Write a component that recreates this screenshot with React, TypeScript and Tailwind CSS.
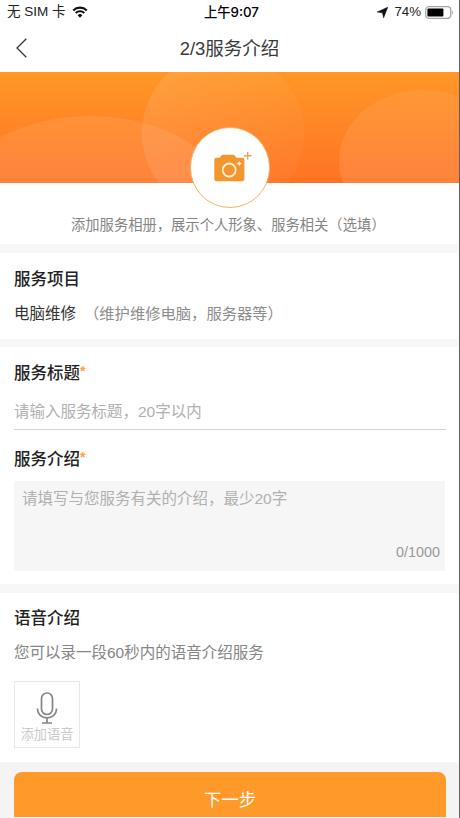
import type { ReactNode } from "react";

const WifiIcon = () => (
  <svg className="ml-[6px] h-[12px] w-[16px]" viewBox="0 0 16 12" fill="none">
    <path d="M1.2 4.4a9.7 9.7 0 0 1 13.6 0" stroke="#111" strokeWidth="2.1" />
    <path d="M3.7 7a6.1 6.1 0 0 1 8.6 0" stroke="#111" strokeWidth="2" />
    <path d="M8 11.8 5.6 9.3a3.4 3.4 0 0 1 4.8 0z" fill="#111" />
  </svg>
);

const LocationIcon = () => (
  <svg className="h-[11px] w-[11px]" viewBox="0 0 11 11">
    <path d="M10.7.3 6.6 10.8 5.5 5.8.3 5z" fill="#111" stroke="#111" strokeWidth=".6" />
  </svg>
);

const BatteryIcon = () => (
  <svg className="ml-1 h-[13px] w-[29px]" viewBox="0 0 29 13">
    <rect x=".7" y=".7" width="25" height="11.6" rx="3" fill="none" stroke="#a3a3a3" strokeWidth="1.2" />
    <rect x="2.4" y="2.4" width="16" height="8.2" rx="1" fill="#000" />
    <path d="M26.8 4.4c1.5.5 1.5 3.7 0 4.2z" fill="#a3a3a3" />
  </svg>
);

const CameraIcon = () => (
  <svg className="-mt-[2px] h-[32px] w-[40px] overflow-visible" viewBox="0 0 40 32" fill="none">
    <path
      d="M6.500 6.800h3.200l1.800-2.300q.6-.7 1.600-.7h10q1 0 1.600.7l1.800 2.300h5.700q2.200 0 2.200 2.200v19q0 2.200-2.200 2.200H6.500q-2.200 0-2.200-2.200V9q0-2.200 2.200-2.200z"
      fill="#f3962d"
    />
    <circle cx="19.200" cy="19" r="6.500" stroke="#fff1dc" strokeWidth="1.800" />
    <path d="m29.300 9.700.9 1.900 1.900.9-1.900.9-.9 1.900-.9-1.900-1.900-.9 1.900-.9z" fill="#fff1dc" />
    <path d="M37.700 1v7.600M33.900 4.800h7.600" stroke="#e9a55c" strokeWidth="1.400" />
  </svg>
);

const MicIcon = () => (
  <svg className="h-[32px] w-[22px]" viewBox="0 0 22 32" fill="none" stroke="#858585" strokeWidth="1.700">
    <rect x="5.500" y="1" width="11" height="21.500" rx="5.500" />
    <path d="M1.500 16.500v.8a9.500 8.500 0 0 0 19 0v-.8M11 25.800v5M6 31h10" />
  </svg>
);

const Title = ({ children, required }: { children: ReactNode; required?: boolean }) => (
  <h2 className="flex h-6 items-center text-[16.5px] font-medium leading-6 text-[#222]">
    {children}
    {required && <span className="-mt-[5px] text-[14px] font-bold text-[#ffa23c]">*</span>}
  </h2>
);

const App = () => {
  return (
    <div className="flex h-[818px] w-[460px] flex-col overflow-hidden border-r border-[#606060] bg-[#f7f7f7] font-['Liberation_Sans','Noto_Sans_CJK_SC',sans-serif]">
      <header className="h-[72px] shrink-0 bg-white">
        <div className="grid h-6 grid-cols-3 items-center pl-[7px] pr-[5px] text-[13.5px] leading-6 text-[#222]">
          <div className="flex items-center whitespace-nowrap">
            无 SIM 卡
            <WifiIcon />
          </div>
          <p className="pl-[2px] text-center font-['Inter','Noto_Sans_CJK_SC',sans-serif] text-[13.3px] font-medium text-black">
            上午9:07
          </p>
          <div className="flex items-center justify-end">
            <LocationIcon />
            <span className="ml-[6px] text-[13.3px]">74%</span>
            <BatteryIcon />
          </div>
        </div>
        <div className="grid h-12 grid-cols-[40px_1fr_40px] items-center">
          <button className="pl-4" aria-label="返回">
            <svg className="h-5 w-[11px]" viewBox="0 0 11 20" fill="none" stroke="#333" strokeWidth="1.300">
              <path d="M10.300.8 1 10l9.300 9.200" />
            </svg>
          </button>
          <h1 className="pt-px text-center text-[18.5px] text-[#3a3a3a]">2/3服务介绍</h1>
        </div>
      </header>

      <section className="relative h-[172px] shrink-0 bg-white">
        <svg className="block h-[111px] w-full" viewBox="0 0 459 111" preserveAspectRatio="none">
          <defs>
            <linearGradient id="banner" x1="0" y1="0" x2="0" y2="1">
              <stop offset="0" stopColor="#ff9727" />
              <stop offset="1" stopColor="#ff7324" />
            </linearGradient>
            <linearGradient id="bubble" gradientUnits="userSpaceOnUse" x1="0" y1="0" x2="0" y2="111">
              <stop offset="0" stopColor="#fff" stopOpacity=".05" />
              <stop offset="1" stopColor="#fff" stopOpacity=".11" />
            </linearGradient>
            <linearGradient id="bubbleFade" x1="0" y1="0" x2="1" y2="0">
              <stop offset="0" stopColor="#fff" stopOpacity=".1" />
              <stop offset="1" stopColor="#fff" stopOpacity=".03" />
            </linearGradient>
          </defs>
          <rect width="459" height="111" fill="url(#banner)" />
          <ellipse cx="90" cy="136" rx="140" ry="92" fill="url(#bubble)" />
          <circle cx="223" cy="61" r="81" fill="url(#bubbleFade)" />
          <ellipse cx="423" cy="89" rx="84" ry="71" fill="url(#bubble)" />
        </svg>
        <button
          className="absolute left-[190px] top-[55px] flex h-[81px] w-[80px] items-center justify-center rounded-full border border-[#f3b266] bg-white"
          aria-label="添加服务相册"
        >
          <CameraIcon />
        </button>
        <p className="mt-[31px] whitespace-nowrap pl-[71px] text-[14.3px] leading-[22px] text-[#858585]">
          添加服务相册，展示个人形象、服务相关（选填）
        </p>
      </section>

      <section className="mt-[9px] h-[86px] shrink-0 bg-white px-[14px] pt-[14px]">
        <Title>服务项目</Title>
        <p className="mt-[11px] flex gap-[9px] text-[15.5px] leading-6 text-[#333]">
          <span>电脑维修</span>
          <span className="-ml-px text-[15.3px] text-[#8c8c8c]">（维护维修电脑，服务器等）</span>
        </p>
      </section>

      <section className="mt-2 h-[237px] shrink-0 bg-white px-[14px] pt-[14px]">
        <Title required>服务标题</Title>
        <div className="mt-[10px] h-[35px] w-[432px] border-b border-[#d4d4d4] pt-[5px] text-[15.5px] leading-6 text-[#b0b0b0]">
          请输入服务标题，20字以内
        </div>
        <div className="mt-[17px]">
          <Title required>服务介绍</Title>
        </div>
        <div className="mt-[10px] flex h-[90px] w-[431px] flex-col justify-between bg-[#f6f6f6] pb-[7px] pl-2 pr-[5px] pt-[6px] text-[15.5px] leading-6 text-[#b0b0b0]">
          <p>请填写与您服务有关的介绍，最少20字</p>
          <p className="text-right text-[14.4px] text-[#999]">0/1000</p>
        </div>
      </section>

      <section className="mt-[9px] h-[169px] shrink-0 bg-white px-[14px] pt-[13px]">
        <Title>语音介绍</Title>
        <p className="mt-[11px] text-[15.5px] leading-6 text-[#858585]">您可以录一段60秒内的语音介绍服务</p>
        <button className="mt-4 flex h-[67px] w-[66px] flex-col items-center border border-[#e8e8e8] pt-[10px]">
          <MicIcon />
          <span className="whitespace-nowrap text-[13.2px] leading-[22px] text-[#c9c9c9]">添加语音</span>
        </button>
      </section>

      <footer className="h-14 shrink-0 bg-[#f4f4f4] px-[14px] pt-[10px]">
        <button className="h-[45px] w-[432px] rounded-t-[8px] bg-[#ff9929] pt-[12px] text-[17.5px] text-white">
          下一步
        </button>
      </footer>
    </div>
  );
};

export default App;
